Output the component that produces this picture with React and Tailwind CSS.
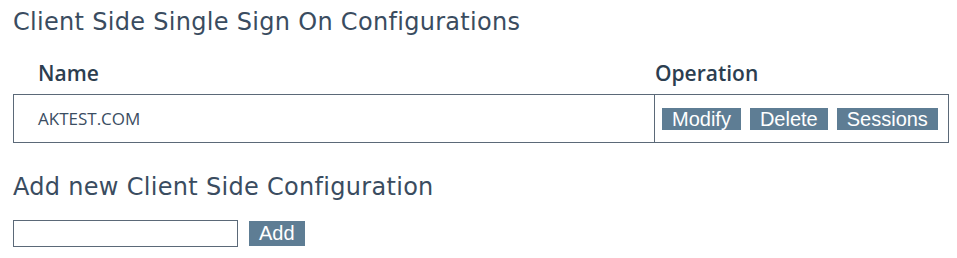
export default function App() {
  const btn =
    "bg-[#5e7d94] text-white text-[20px] leading-[22px] h-[22px] px-[10px] font-[family-name:'Liberation_Sans',Arial,sans-serif]";
  const head =
    "font-[family-name:'Open_Sans',sans-serif] font-semibold text-[21px] leading-[28px] text-[#2c3e50]";
  return (
    <div className="w-[957px] h-[258px] bg-white pl-[13px] font-[family-name:'DejaVu_Sans',sans-serif] text-[#3a4c60]">
      <h1 className="pt-[8px] text-[24px] leading-[28px] tracking-[0.3px]">
        Client Side Single Sign On Configurations
      </h1>
      <div className="mt-[23px] w-[936px]">
        <div className="grid grid-cols-[641px_295px] h-[35px] items-start">
          <div className={head + " pl-[25px]"}>Name</div>
          <div className={head + " pl-[1px]"}>Operation</div>
        </div>
        <div className="grid grid-cols-[641px_295px] h-[49px] border border-[#5b6978]">
          <div className="flex items-center pl-[24px] border-r border-[#5b6978] font-[family-name:'Open_Sans',sans-serif] text-[17px] text-[#3b4d62]">
            AKTEST.COM
          </div>
          <div className="flex items-center gap-[9px] pl-[7px]">
            <button className={btn}>Modify</button>
            <button className={btn}>Delete</button>
            <button className={btn}>Sessions</button>
          </div>
        </div>
      </div>
      <h2 className="mt-[30px] text-[24px] leading-[28px] tracking-[0.3px]">
        Add new Client Side Configuration
      </h2>
      <div className="mt-[19px] flex items-center gap-[11px]">
        <input
          type="text"
          className="w-[225px] h-[27px] border border-[#5b6978] bg-white outline-none"
        />
        <button className={btn + " h-[25px] leading-[25px]"}>Add</button>
      </div>
    </div>
  );
}
